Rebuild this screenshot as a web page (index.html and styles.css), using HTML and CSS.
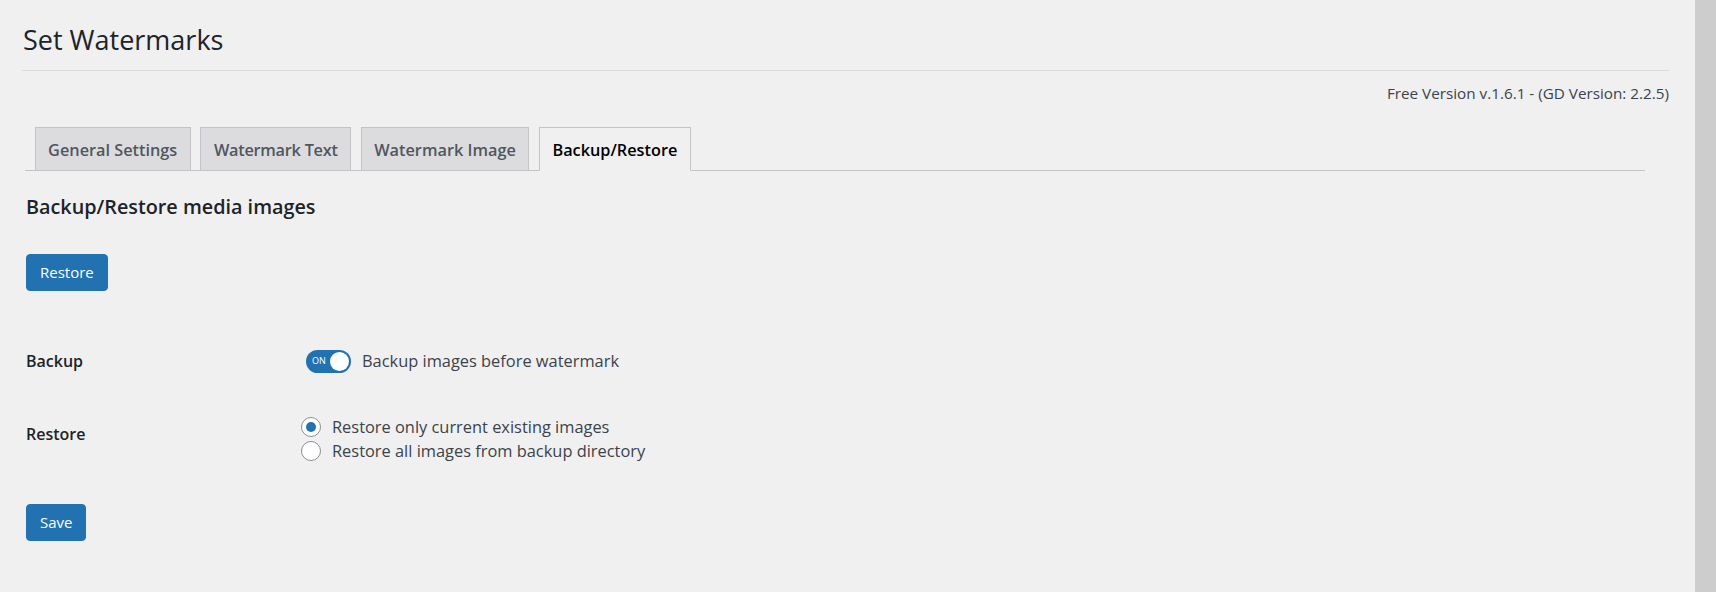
FILE: index.html
```html
<!DOCTYPE html>
<html lang="en">
<head>
<meta charset="utf-8">
<title>Set Watermarks</title>
<link rel="stylesheet" href="styles.css">
</head>
<body>
<div class="page">
  <main class="main">
    <h1 class="title">Set Watermarks</h1>
    <hr class="rule">
    <p class="version">Free Version v.1.6.1 - (GD Version: 2.2.5)</p>
    <nav class="tabs">
      <a class="tab">General Settings</a>
      <a class="tab">Watermark Text</a>
      <a class="tab">Watermark Image</a>
      <a class="tab tab-active">Backup/Restore</a>
    </nav>
    <section class="panel">
      <h2 class="panel-title">Backup/Restore media images</h2>
      <button class="btn">Restore</button>
      <div class="form-table">
        <div class="row row-backup">
          <div class="label">Backup</div>
          <div class="field">
            <span class="toggle"><span class="toggle-on">ON</span><span class="knob"></span></span>
            <span class="field-text">Backup images before watermark</span>
          </div>
        </div>
        <div class="row row-restore">
          <div class="label label-restore">Restore</div>
          <div class="field field-radios">
            <label class="radio-line"><span class="radio radio-checked"></span>Restore only current existing images</label>
            <label class="radio-line"><span class="radio"></span>Restore all images from backup directory</label>
          </div>
        </div>
      </div>
      <button class="btn btn-save">Save</button>
    </section>
  </main>
  <div class="scrollbar"></div>
</div>
</body>
</html>
```

FILE: styles.css
```css
html, body {
  margin: 0;
  padding: 0;
  background: #f0f0f1;
}
body {
  font-family: "Open Sans", "Noto Sans", sans-serif;
  color: #3c434a;
}
.page {
  display: flex;
  width: 1716px;
  height: 592px;
  overflow: hidden;
}
.main {
  flex: 1;
  padding: 0 26px 0 22px;
}
.scrollbar {
  width: 21px;
  background: #cdcdcd;
}
.title {
  margin: 22px 0 0 0;
  font-size: 27px;
  line-height: 36px;
  font-weight: 400;
  color: #1d2327;
  padding-left: 1px;
}
.rule {
  margin: 12px 0 0 0;
  border: 0;
  border-top: 1px solid #dcdcde;
  height: 0;
}
.version {
  margin: 12px 0 0 0;
  text-align: right;
  font-size: 15.25px;
  line-height: 20px;
  color: #3c434a;
}
.tabs {
  display: flex;
  margin: 24px 24px 0 3px;
  border-bottom: 1px solid #c3c4c7;
  height: 43px;
}
.tab {
  margin-left: 9.6px;
  height: 30px;
  padding: 7px 12.5px 5px;
  border: 1px solid #c3c4c7;
  background: #dcdcde;
  color: #50575e;
  font-size: 16.3px;
  font-weight: 600;
  line-height: 30px;
  white-space: nowrap;
}
.tab:nth-child(2) {
  letter-spacing: -0.25px;
}
.tab-active {
  background: #f0f0f1;
  color: #000;
  border-bottom-color: #f0f0f1;
}
.panel {
  padding-left: 4px;
}
.panel-title {
  margin: 23px 0 0 0;
  font-size: 19.8px;
  line-height: 26px;
  font-weight: 600;
  color: #1d2327;
}
.btn {
  display: block;
  margin-top: 34px;
  height: 37px;
  padding: 0 13px;
  border: 1px solid #2271b1;
  border-radius: 4px;
  background: #2271b1;
  color: #fff;
  font-family: inherit;
  font-size: 15px;
  line-height: 35px;
}
.form-table {
  margin-top: 58px;
}
.row {
  display: grid;
  grid-template-columns: 275px 1fr;
}
.row-backup {
  align-items: center;
  height: 23px;
}
.row-restore {
  margin-top: 43px;
  align-items: start;
}
.label {
  font-size: 16px;
  font-weight: 600;
  color: #1d2327;
  line-height: 24px;
}
.label-restore {
  padding-top: 7px;
}
.field {
  display: flex;
  align-items: center;
  font-size: 16.4px;
  line-height: 24px;
}
.toggle {
  position: relative;
  display: inline-flex;
  align-items: center;
  width: 45px;
  height: 23px;
  margin-left: 5px;
  border-radius: 12px;
  background: #2271b1;
  box-sizing: border-box;
}
.toggle-on {
  margin-left: 6px;
  font-size: 9px;
  line-height: 10px;
  color: #fff;
}
.knob {
  position: absolute;
  right: 2px;
  top: 2px;
  width: 19px;
  height: 19px;
  border-radius: 50%;
  background: #fff;
}
.field-text {
  margin-left: 11px;
}
.field-radios {
  flex-direction: column;
  align-items: flex-start;
}
.radio-line {
  display: flex;
  align-items: center;
  height: 24px;
}
.radio {
  position: relative;
  width: 20px;
  height: 20px;
  box-sizing: border-box;
  margin-right: 11px;
  border: 1px solid #8c8f94;
  border-radius: 50%;
  background: #fff;
}
.radio-checked::after {
  content: "";
  position: absolute;
  left: 4px;
  top: 4px;
  width: 10px;
  height: 10px;
  border-radius: 50%;
  background: #2271b1;
}
.btn-save {
  margin-top: 41px;
}
```
